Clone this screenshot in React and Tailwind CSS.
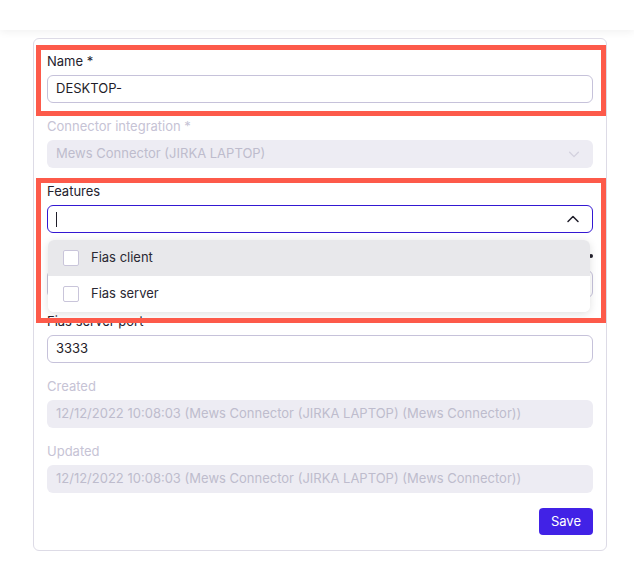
import React from "react";

const ChevronDown = ({ className }) => (
  <svg viewBox="0 0 16 16" className={className} fill="none" stroke="currentColor" strokeWidth="1.5" strokeLinecap="round" strokeLinejoin="round">
    <path d="M3 6l5 5 5-5" />
  </svg>
);

const ChevronUp = ({ className }) => (
  <svg viewBox="0 0 16 16" className={className} fill="none" stroke="currentColor" strokeWidth="1.5" strokeLinecap="round" strokeLinejoin="round">
    <path d="M3 10.5l5-5 5 5" />
  </svg>
);

function Field({ label, disabled, children, className = "" }) {
  return (
    <div className={`relative flex flex-col gap-[6px] ${className}`}>
      <label className={`h-4 text-[13px] leading-4 ${disabled ? "text-[#c6c3d5]" : "text-[#24222e]"}`}>{label}</label>
      {children}
    </div>
  );
}

function TextInput({ value }) {
  return (
    <div className="flex h-[28px] items-center rounded-md border border-[#c6c2da] bg-white px-[8px] text-[13px] text-[#1f1d29]">
      {value}
    </div>
  );
}

function DisabledInput({ value, chevron }) {
  return (
    <div className="flex h-[28px] items-center justify-between rounded-md bg-[#edecf3] px-[9px] text-[13px] text-[#bebccd]">
      <span className="whitespace-nowrap">{value}</span>
      {chevron && <ChevronDown className="mr-[3px] h-[14px] w-[14px] text-[#d3d1de]" />}
    </div>
  );
}

function Option({ label, active }) {
  return (
    <div className={`flex h-[36px] items-center gap-[12px] px-[15px] ${active ? "bg-[#e8e8eb]" : "bg-white"}`}>
      <span className="h-[16px] w-[16px] rounded-[2px] border border-[#c9c5da] bg-white" />
      <span className="text-[13px] text-[#2a2833]">{label}</span>
    </div>
  );
}

export default function App() {
  const stamp = "12/12/2022 10:08:03 (Mews Connector (JIRKA LAPTOP) (Mews Connector))";
  return (
    <div className="min-h-[581px] bg-white font-['Inter','Liberation_Sans',sans-serif]">
      <div className="h-[30px] bg-white shadow-[0_2px_8px_rgba(0,0,0,0.06)]" />
      <div className="pl-[33px] pr-[27px] pt-[8px]">
        <div className="flex flex-col gap-[15px] rounded-md border border-[#dddbe6] bg-white px-[13px] pt-[14px] pb-[15px]">
          <Field label="Name *">
            <TextInput value="DESKTOP-" />
            <div className="pointer-events-none absolute -top-[8px] -bottom-[13px] -left-[11px] -right-[13px] border-[5px] border-[#fd5a4a]" />
          </Field>

          <Field label="Connector integration *" disabled>
            <DisabledInput value="Mews Connector (JIRKA LAPTOP)" chevron />
          </Field>

          <Field label="Features" className="z-10">
            <div className="flex h-[28px] items-center justify-between rounded-md border border-[#3418d2] bg-white px-[8px]">
              <span className="h-[15px] w-px bg-[#1f1d29]" />
              <ChevronUp className="mr-[3px] h-[16px] w-[16px] text-[#1f1d29]" />
            </div>
            <div className="absolute left-px right-[3px] top-[57px] overflow-hidden rounded-md bg-white shadow-[0_2px_8px_rgba(0,0,0,0.12)]">
              <Option label="Fias client" active />
              <Option label="Fias server" />
            </div>
            <div className="pointer-events-none absolute -top-[5px] -left-[11px] -right-[13px] h-[145px] border-[5px] border-[#fd5a4a]" />
          </Field>

          {/* field hidden under the open dropdown */}
          <div className="flex flex-col gap-[6px]">
            <div className="flex h-4 justify-end">
              <span className="mt-[6px] h-[4px] w-[4px] rounded-full bg-[#24222e]" />
            </div>
            <TextInput value="" />
          </div>

          <Field label="Fias server port">
            <TextInput value="3333" />
          </Field>

          <Field label="Created" disabled>
            <DisabledInput value={stamp} />
          </Field>

          <Field label="Updated" disabled>
            <DisabledInput value={stamp} />
          </Field>

          <div className="flex justify-end">
            <button className="h-[27px] rounded-[4px] bg-[#4122e6] px-[12px] text-[13px] text-white">Save</button>
          </div>
        </div>
      </div>
    </div>
  );
}
